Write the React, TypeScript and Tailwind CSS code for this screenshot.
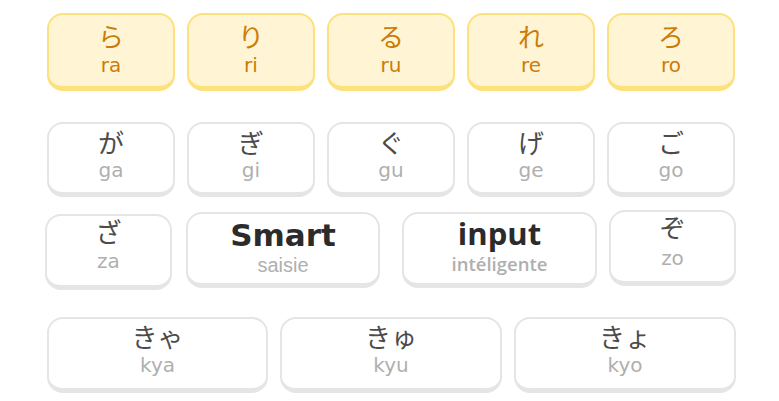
import React from "react";

const kanaFont = { fontFamily: '"Noto Sans CJK JP", "Noto Sans", sans-serif' };

function Key({ kana, romaji, w, yellow, h, cls = "", pt, mt }: { kana: string; romaji: string; w: string; yellow?: boolean; h: string; cls?: string; pt: string; mt: string }) {
  return (
    <div
      className={`${w} ${h} ${cls} ${pt} shrink-0 rounded-[16px] border-2 border-b-[5px] flex flex-col items-center ${
        yellow ? "bg-[#fff5d4] border-[#fde17c]" : "bg-white border-[#e5e5e5]"
      }`}
    >
      <div
        className={`leading-[30px] text-[26px] ${yellow ? "text-[#cc7c08]" : "text-[#4b4b4b]"}`}
        style={kanaFont}
      >
        {kana}
      </div>
      <div
        className={`${mt} leading-[24px] text-[20px] font-['DejaVu_Sans'] ${yellow ? "text-[#cc7c08]" : "text-[#afafaf]"}`}
      >
        {romaji}
      </div>
    </div>
  );
}

export default function App() {
  return (
    <div className="w-[779px] h-[401px] bg-white overflow-hidden relative">
      <div className="flex gap-[12px] pl-[47px] pt-[13px]">
        <Key kana="ら" romaji="ra" w="w-[128px]" yellow h="h-[78px]" pt="pt-[6px]" mt="mt-[2px]" />
        <Key kana="り" romaji="ri" w="w-[128px]" yellow h="h-[78px]" pt="pt-[6px]" mt="mt-[2px]" />
        <Key kana="る" romaji="ru" w="w-[128px]" yellow h="h-[78px]" pt="pt-[6px]" mt="mt-[2px]" />
        <Key kana="れ" romaji="re" w="w-[128px]" yellow h="h-[78px]" pt="pt-[6px]" mt="mt-[2px]" />
        <Key kana="ろ" romaji="ro" w="w-[128px]" yellow h="h-[78px]" pt="pt-[6px]" mt="mt-[2px]" />
      </div>
      <div className="flex gap-[12px] pl-[47px] mt-[31px]">
        <Key kana="が" romaji="ga" w="w-[128px]" h="h-[75px]" pt="pt-[3px]" mt="mt-[1px]" />
        <Key kana="ぎ" romaji="gi" w="w-[128px]" h="h-[75px]" pt="pt-[3px]" mt="mt-[1px]" />
        <Key kana="ぐ" romaji="gu" w="w-[128px]" h="h-[75px]" pt="pt-[3px]" mt="mt-[1px]" />
        <Key kana="げ" romaji="ge" w="w-[128px]" h="h-[75px]" pt="pt-[3px]" mt="mt-[1px]" />
        <Key kana="ご" romaji="go" w="w-[128px]" h="h-[75px]" pt="pt-[3px]" mt="mt-[1px]" />
      </div>
      <div className="flex items-start pl-[45px] mt-[15px]">
        <Key kana="ざ" romaji="za" w="w-[127px]" h="h-[76px]" cls="mt-[2px]" pt="pt-0" mt="mt-[3px]" />
        <div className="ml-[14px] w-[194px] h-[76px] shrink-0 rounded-[16px] border-2 border-b-[5px] border-[#e5e5e5] bg-white flex flex-col items-center pt-[2px]">
          <div className="text-[31px] leading-[38px] font-bold text-[#2b2b2b] font-['DejaVu_Sans']">Smart</div>
          <div className="text-[20px] leading-[22px] text-[#afafaf] font-['Liberation_Sans']">saisie</div>
        </div>
        <div className="ml-[22px] w-[195px] h-[76px] shrink-0 rounded-[16px] border-2 border-b-[5px] border-[#e5e5e5] bg-white flex flex-col items-center pt-[1px]">
          <div className="text-[31px] leading-[36px] font-bold text-[#2b2b2b] font-['Open_Sans']">input</div>
          <div className="mt-[2px] text-[18.5px] leading-[22px] font-semibold text-[#afafaf] font-['Open_Sans']">intéligente</div>
        </div>
        <Key kana="ぞ" romaji="zo" w="w-[127px]" h="h-[76px]" cls="ml-[12px] -mt-[2px]" pt="pt-0" mt="mt-[4px]" />
      </div>
      <div className="flex gap-[12px] pl-[47px] mt-[27px]">
        <Key kana="きゃ" romaji="kya" w="w-[221px]" h="h-[76px]" pt="pt-[2px]" mt="mt-[2px]" />
        <Key kana="きゅ" romaji="kyu" w="w-[222px]" h="h-[76px]" pt="pt-[2px]" mt="mt-[2px]" />
        <Key kana="きょ" romaji="kyo" w="w-[222px]" h="h-[76px]" pt="pt-[2px]" mt="mt-[2px]" />
      </div>
    </div>
  );
}
